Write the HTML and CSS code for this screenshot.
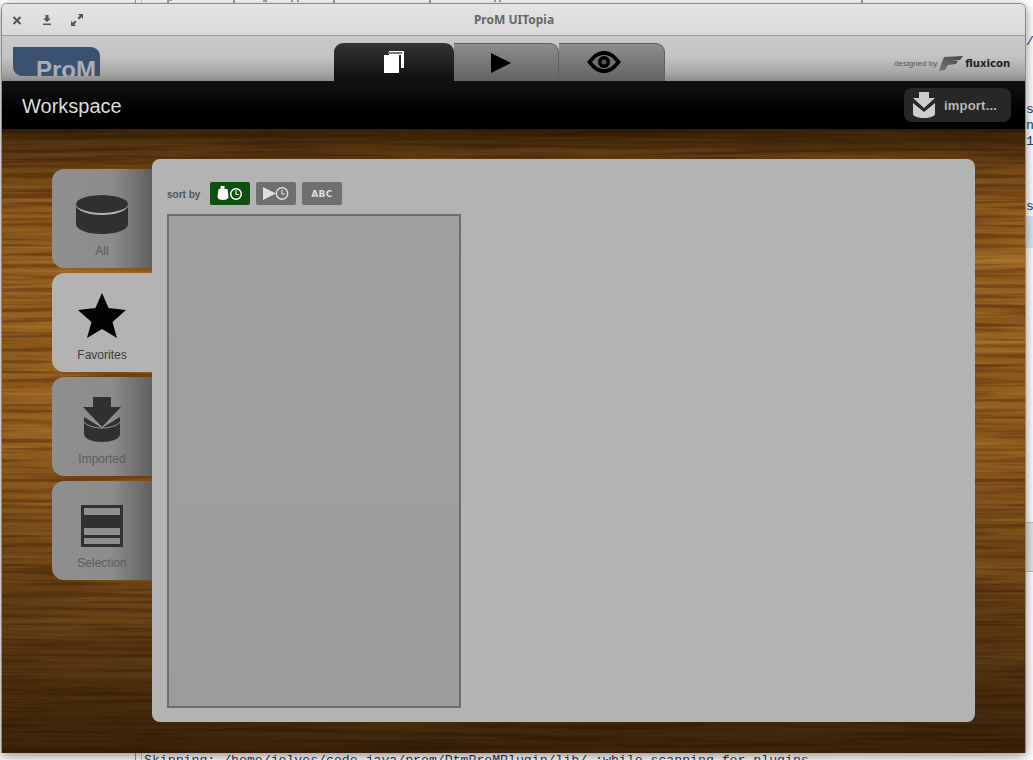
FILE: index.html
```html
<!DOCTYPE html>
<html lang="en">
<head>
	<meta charset="UTF-8">
	<title>ProM UITopia</title>
	<link rel="stylesheet" href="styles.css">
</head>
<body>
<!-- terminal behind the window -->
<div class="terminal">
	<div class="term-rule"></div>
	<svg class="term-ticks" width="760" height="3"><path d="M48 0 V3 M49 0 H52 M114 0 V3 M144 0 V2 M146 0 V2 M172 0 V2 M178 0 V2 M214 0 V3 M310 0 V3 M375 0 V2 M380 0 V2 M742 0 V3" stroke="#3a4a6a" fill="none"/></svg>
	<div class="term-bottom">Skipping: /home/jelves/code.java/prom/DtmProMPlugin/lib/ ;while scanning for plugins</div>
	<div class="term-side">
		<span class="side-y">/</span>
		<span class="side-s">s</span>
		<span class="side-n">n</span>
		<span class="side-1">1</span>
		<span class="side-s2">s</span>
	</div>
	<div class="side-blue"></div>
	<div class="side-gray"></div>
</div>

<div class="window">
	<div class="titlebar">
		<div class="win-btns">
			<svg class="win-btn" viewBox="0 0 12 12"><path d="M2.500 3 L9.500 10 M9.500 3 L2.500 10" stroke="#555" stroke-width="2" fill="none"/></svg>
			<svg class="win-btn" viewBox="0 0 12 12"><path d="M4.500 1 H7.500 V4.500 H10 L6 8 L2 4.500 H4.500 Z M2 9.500 H10 V11 H2 Z" fill="#555"/></svg>
			<svg class="win-btn" viewBox="0 0 12 12"><path d="M7 0 H12 V5 L10.300 3.300 L8 5.600 L6.400 4 L8.700 1.700 Z M0 7 L1.700 8.700 L4 6.400 L5.600 8 L3.300 10.300 L5 12 H0 Z" fill="#555"/></svg>
		</div>
		<div class="win-title">ProM UITopia</div>
	</div>

	<div class="topbar">
		<div class="logo"><span>ProM</span></div>
		<div class="tabs">
			<div class="tab tab-on">
				<svg width="22" height="24" viewBox="0 0 22 24"><path d="M6 1 H21 V18 H18 V5 H6 Z" fill="#fff"/><path d="M5 2 H19 V4 H5 Z" fill="#777"/><rect x="1" y="5" width="15" height="18" fill="#fff"/></svg>
			</div>
			<div class="tab tab-play">
				<svg width="22" height="22" viewBox="0 0 22 22"><path d="M1 1 L21 11 L1 21 Z" fill="#000"/></svg>
			</div>
			<div class="tab tab-last">
				<svg width="36" height="22" viewBox="0 0 36 22"><path d="M1 11 C8 2 13 0 18 0 C23 0 28 2 35 11 C28 20 23 22 18 22 C13 22 8 20 1 11 Z" fill="#000"/><path d="M6 11 C10 6 13 4 18 4 C23 4 26 6 30 11 C26 16 23 18 18 18 C13 18 10 16 6 11 Z" fill="#6f6f6f"/><circle cx="18" cy="11" r="6" fill="#000"/><circle cx="18" cy="11" r="2.500" fill="#555"/></svg>
			</div>
		</div>
		<div class="credit">
			<span class="credit-by">designed by</span>
			<svg width="24" height="15" viewBox="0 0 24 15">
				<defs><linearGradient id="wing" x1="1" y1="0" x2="0" y2="1"><stop offset="0" stop-color="#444"/><stop offset="1" stop-color="#777"/></linearGradient></defs>
				<path d="M5 1 L24 0 L21 4 L12 5 L19 5 L17 8 L9 9 L6 14 L0 15 L3 6 Z" fill="url(#wing)"/>
			</svg>
			<span class="credit-name">fluxicon</span>
		</div>
	</div>

	<div class="blackbar">
		<div class="bar-title">Workspace</div>
		<div class="import-btn">
			<svg width="22" height="26" viewBox="0 0 22 26"><path d="M6 0 H16 V6 H22 L11 16 L0 6 H6 Z" fill="#ccc"/><path d="M0 11 L11 20 L22 11 V22 C22 24 17 26 11 26 C5 26 0 24 0 22 Z" fill="#ccc"/></svg>
			<span>import...</span>
		</div>
	</div>

	<div class="wood">
		<svg class="wood-tex" width="1024" height="624">
			<filter id="streak" x="0" y="0" width="100%" height="100%" color-interpolation-filters="sRGB">
				<feTurbulence type="fractalNoise" baseFrequency="0.002 0.035" numOctaves="5" seed="4" result="n"/>
				<feColorMatrix in="n" type="matrix" values="0 0 0 0 0.72  0 0 0 0 0.50  0 0 0 0 0.20  3 0 0 0 -1.250"/>
			</filter>
			<filter id="fine" x="0" y="0" width="100%" height="100%" color-interpolation-filters="sRGB">
				<feTurbulence type="fractalNoise" baseFrequency="0.004 0.3" numOctaves="4" seed="21" result="n"/>
				<feColorMatrix in="n" type="matrix" values="0 0 0 0 0.72  0 0 0 0 0.50  0 0 0 0 0.20  3.500 0 0 0 -1.600"/>
			</filter>
			<filter id="grain" x="0" y="0" width="100%" height="100%" color-interpolation-filters="sRGB">
				<feTurbulence type="fractalNoise" baseFrequency="0.006 0.2" numOctaves="5" seed="11" result="n"/>
				<feColorMatrix in="n" type="matrix" values="0 0 0 0 0.25  0 0 0 0 0.12  0 0 0 0 0.02  4.500 0 0 0 -2"/>
			</filter>
			<rect class="tex-streak" width="1024" height="624" filter="url(#streak)"/>
			<rect class="tex-fine" width="1024" height="624" filter="url(#fine)"/>
			<rect class="tex-grain" width="1024" height="624" filter="url(#grain)"/>
		</svg>
		<div class="wood-shade"></div>

		<div class="side-tabs">
			<div class="side-tab">
				<svg width="52" height="40" viewBox="0 0 52 40"><path d="M0 9 V29 C0 35 12 39 26 39 C40 39 52 35 52 29 V9 Z" fill="#2f3131"/><ellipse cx="26" cy="10" rx="26" ry="10" fill="#b4b4b4"/><ellipse cx="26" cy="9" rx="26" ry="9" fill="#2f3131"/></svg>
				<span>All</span>
			</div>
			<div class="side-tab side-tab-on">
				<svg width="48" height="46" viewBox="0 0 48 46"><path d="M24 0 L30.500 15 L48 17 L34.500 29 L39 45 L24 36 L9 45 L13.500 29 L0 17 L17.500 15 Z" fill="#020404"/></svg>
				<span>Favorites</span>
			</div>
			<div class="side-tab">
				<svg width="38" height="46" viewBox="0 0 38 46"><path d="M10 0 H28 V10 H38 L19 30 L0 10 H10 Z" fill="#2f3131"/><path d="M1 20 L19 31 L37 20 V37 C37 42 28 45 19 45 C10 45 1 42 1 37 Z" fill="#2f3131"/><path d="M1 25 C4 29 12 31 19 31 C26 31 34 29 37 25 M19 31 L7 19 M19 31 L31 19" stroke="#999" fill="none"/></svg>
				<span>Imported</span>
			</div>
			<div class="side-tab">
				<svg width="42" height="42" viewBox="0 0 42 42"><rect width="42" height="42" fill="#2f3131"/><rect x="3" y="3" width="36" height="7" fill="#8f8f8f"/><rect x="3" y="23" width="36" height="7" fill="#8f8f8f"/><rect x="3" y="33" width="36" height="6" fill="#8f8f8f"/></svg>
				<span>Selection</span>
			</div>
		</div>

		<div class="panel">
			<div class="sort-row">
				<span class="sort-label">sort by</span>
				<div class="sort-btn sort-on">
					<svg width="26" height="15" viewBox="0 0 26 15"><path d="M3.500 0 H7.500 V3 H10.500 L11.500 11 C11.500 13 9 14 6 14 C3 14 0.500 13 0.500 11 L1.500 3 H3.500 Z" fill="#fff"/><circle cx="19" cy="8" r="5.300" fill="none" stroke="#fff" stroke-width="1.500"/><path d="M19 4.500 V8.500 H22" fill="none" stroke="#fff" stroke-width="1.200"/></svg>
				</div>
				<div class="sort-btn">
					<svg width="26" height="15" viewBox="0 0 26 15"><path d="M0 1 L13 7.500 L0 14 Z" fill="#ddd"/><circle cx="19" cy="7.500" r="5.700" fill="none" stroke="#ddd" stroke-width="1.500"/><path d="M19 4 V8 H22" fill="none" stroke="#ddd" stroke-width="1.200"/></svg>
				</div>
				<div class="sort-btn sort-abc">ABC</div>
			</div>
			<div class="list-box"></div>
		</div>
	</div>
</div>
</body>
</html>
```
FILE: styles.css
```css
html, body { margin: 0; padding: 0; }
body {
	width: 1033px;
	height: 760px;
	overflow: hidden;
	position: relative;
	background: #fff;
	font-family: "Liberation Sans", Arial, sans-serif;
}

/* terminal behind the window */
.terminal {
	position: absolute;
	top: 0;
	left: 0;
	width: 1033px;
	height: 760px;
	font-family: "Liberation Mono", monospace;
	font-size: 13.200px;
	color: #1c3a6e;
}
.term-rule {
	position: absolute;
	top: 0;
	left: 135px;
	width: 5px;
	height: 760px;
	border-left: 1px solid #999;
	border-right: 1px solid #ccc;
}
.term-ticks {
	position: absolute;
	top: 0;
	left: 120px;
}
.term-bottom {
	position: absolute;
	top: 753px;
	left: 144px;
	white-space: nowrap;
}
.term-side span { position: absolute; left: 1026px; }
.side-y { top: 34px; }
.side-s { top: 102px; }
.side-n { top: 118px; }
.side-1 { top: 134px; }
.side-s2 { top: 199px; }
.side-blue {
	position: absolute;
	top: 216px;
	left: 1026px;
	width: 7px;
	height: 32px;
	background: #dfe6f0;
}
.side-gray {
	position: absolute;
	top: 522px;
	left: 1026px;
	width: 7px;
	height: 48px;
	background: #e4e4e4;
	border-top: 1px solid #bbb;
	border-bottom: 1px solid #bbb;
}

/* window */
.window {
	position: absolute;
	top: 3px;
	left: 1px;
	width: 1025px;
	height: 750px;
	display: flex;
	flex-direction: column;
	border-radius: 6px 6px 0 0;
	overflow: hidden;
	border: 1px solid #8a8a8a;
	border-bottom: 0;
	box-sizing: border-box;
	box-shadow: 0 3px 12px rgba(0,0,0,.45);
}

.titlebar {
	height: 31px;
	flex: none;
	display: flex;
	align-items: center;
	position: relative;
	background: linear-gradient(#e4e4e4, #d9d9d9);
	border-bottom: 1px solid #9a9a9a;
}
.win-btns { display: flex; gap: 18px; margin-left: 9px; }
.win-btn { width: 12px; height: 12px; }
.win-title {
	position: absolute;
	left: 0;
	right: 0;
	text-align: center;
	font-family: "Noto Sans", sans-serif;
	font-size: 12px;
	font-weight: bold;
	color: #666;
	padding-left: 1px;
}

.topbar {
	height: 45px;
	flex: none;
	display: flex;
	position: relative;
	background: linear-gradient(#c9c9c9 0%, #c4c4c4 45%, #a8a8a8 80%, #8c8c8c 100%);
}
.logo {
	width: 87px;
	height: 29px;
	margin: 11px 0 0 11px;
	background: #3a5170;
	border-radius: 0 9px 0 9px;
	overflow: hidden;
	position: relative;
	flex: none;
}
.logo span {
	position: absolute;
	left: 23px;
	top: 9px;
	font-size: 24px;
	line-height: 28px;
	font-weight: bold;
	color: #a9afb8;
}
.tabs {
	display: flex;
	align-items: flex-end;
	margin-left: 234px;
	height: 45px;
}
.tab {
	width: 105px;
	height: 38px;
	box-sizing: border-box;
	display: flex;
	align-items: flex-start;
	justify-content: center;
	padding-top: 8px;
	background: linear-gradient(#8d8d8d, #636363);
	border: 1px solid #606060;
	border-bottom: 0;
	border-left: 0;
	border-radius: 0 9px 0 0;
}
.tab-play { padding-right: 10px; }
.tab-last { width: 106px; padding-right: 15px; padding-top: 7px; }
.tab-on {
	width: 120px;
	padding-top: 7px;
	background: linear-gradient(#343434, #0f0f0f);
	border: 0;
	border-radius: 9px 9px 0 0;
}
.credit {
	display: flex;
	align-items: center;
	gap: 2px;
	height: 16px;
	margin: 19px 0 0 229px;
	white-space: nowrap;
}
.credit-by { font-size: 8px; color: #555; }
.credit-name { font-size: 10.200px; font-weight: bold; color: #222; font-family: "DejaVu Sans", sans-serif; }

.blackbar {
	height: 48px;
	flex: none;
	display: flex;
	align-items: center;
	justify-content: space-between;
	background: linear-gradient(#111, #000 70%);
}
.bar-title {
	margin: 2px 0 0 20px;
	font-size: 20px;
	color: #dcdcdc;
}
.import-btn {
	width: 107px;
	height: 34px;
	box-sizing: border-box;
	margin-right: 14px;
	padding-left: 9px;
	display: flex;
	align-items: center;
	gap: 9px;
	background: #272727;
	border-radius: 8px;
	color: #b8b8b8;
	font-size: 13px;
	font-weight: bold;
	letter-spacing: .2px;
}

/* wood background */
.wood {
	flex: 1;
	display: flex;
	align-items: flex-start;
	padding: 30px 0 0 50px;
	position: relative;
	background: #8a561b;
}
.wood-tex {
	position: absolute;
	top: 0;
	left: 0;
}
.tex-streak { opacity: .55; }
.tex-fine { opacity: .4; }
.tex-grain { opacity: .38; }
.wood-shade {
	position: absolute;
	top: 0;
	left: 0;
	right: 0;
	bottom: 0;
	background: linear-gradient(rgba(25,12,0,.75) 0%, rgba(25,12,0,.3) 6%, rgba(25,12,0,0) 15%, rgba(25,12,0,0) 50%, rgba(25,12,0,.42) 78%, rgba(25,12,0,.72) 100%);
}

.side-tabs {
	display: flex;
	flex-direction: column;
	gap: 5px;
	margin-top: 10px;
	position: relative;
	width: 100px;
	flex: none;
}
.side-tab {
	height: 99px;
	box-sizing: border-box;
	display: flex;
	flex-direction: column;
	align-items: center;
	justify-content: flex-end;
	padding-bottom: 10px;
	border-radius: 12px 0 0 12px;
	background: linear-gradient(90deg, #8f8f8f 0%, #8c8c8c 60%, #5f5f5f 100%);
	font-size: 12px;
	color: #5c5c5c;
}
.side-tab svg { margin-bottom: 9px; }
.side-tab-on {
	background: #b3b3b3;
	color: #3c3c3c;
}

.panel {
	position: relative;
	width: 823px;
	height: 563px;
	flex: none;
	box-sizing: border-box;
	padding: 23px 15px 14px;
	background: #b3b3b3;
	border-radius: 8px;
}
.sort-row {
	display: flex;
	align-items: center;
	height: 23px;
	gap: 6px;
	margin-bottom: 9px;
}
.sort-label {
	width: 37px;
	margin-top: 2px;
	font-size: 10px;
	font-weight: bold;
	color: #4f5561;
	white-space: nowrap;
}
.sort-btn {
	width: 40px;
	height: 23px;
	display: flex;
	align-items: center;
	justify-content: center;
	background: #6f6f6f;
	border-radius: 2px;
}
.sort-on { background: #0f4f10; }
.sort-abc {
	font-family: "DejaVu Sans", sans-serif;
	font-size: 9px;
	font-weight: bold;
	color: #ddd;
	letter-spacing: .4px;
}
.list-box {
	width: 294px;
	height: 494px;
	box-sizing: border-box;
	border: 2px solid #6e6e6e;
	background: linear-gradient(#a0a0a0, #9c9c9c);
}
```
